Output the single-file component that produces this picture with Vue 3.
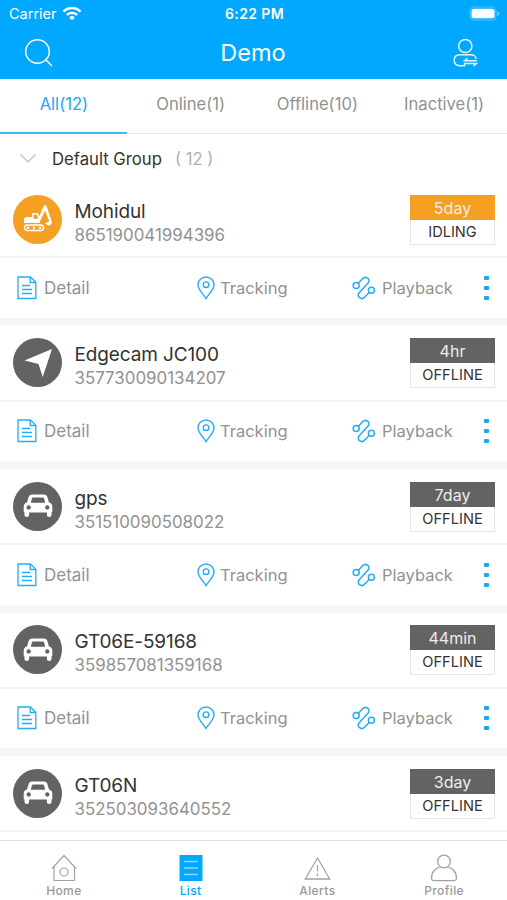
<template>
  <div class="screen">
    <header class="header">
      <div class="status_bar">
        <div class="carrier">
          <span>Carrier</span>
          <svg width="20" height="15" viewBox="0 0 20 15">
            <path d="M1.500 5.600a12 12 0 0 1 17 0" fill="none" stroke="#fff" stroke-width="2.600" />
            <path d="M4.800 9a7.400 7.400 0 0 1 10.400 0" fill="none" stroke="#fff" stroke-width="2.400" />
            <path d="M7.2 11.4a4 4 0 0 1 5.6 0L10 14.3z" fill="#fff" />
          </svg>
        </div>
        <span class="time">6:22 PM</span>
        <svg class="battery" width="31" height="15" viewBox="0 0 31 15">
          <rect x="1" y="1" width="26" height="13" rx="4" fill="none" stroke="#fff" stroke-opacity=".32" stroke-width="1.2" />
          <rect x="2.500" y="2.700" width="23" height="9.600" rx="2" fill="#fff" />
          <path d="M28.5 5q2 .6 2 2.500t-2 2.500z" fill="#fff" opacity=".4" />
        </svg>
      </div>
      <div class="nav_bar">
        <svg width="30" height="30" viewBox="0 0 30 30" fill="none" stroke="#fff" stroke-width="1.5">
          <circle cx="13.500" cy="13.500" r="11.800" />
          <path d="M21.500 21.500 28 28" />
        </svg>
        <h1>Demo</h1>
        <svg width="26" height="30" viewBox="0 0 26 30" fill="none" stroke="#e6f7ff" stroke-width="1.500">
          <circle cx="13.300" cy="8" r="6.600" />
          <path d="M24 21C24 18.500 21.800 16.800 19 16.800H8C4.500 16.800 2.200 19 2.200 22.300S4.500 27.700 8 27.700h4.500V25.500" />
          <path d="M24.800 22.800H12.500l3-2.500M12 25.400h12.500l-3 2.500" />
        </svg>
      </div>
    </header>

    <nav class="tabs">
      <div v-for="tab in tabs" :key="tab" class="tab" :class="{ active: tab === activeTab }" @click="activeTab = tab">
        <span>{{ tab }}</span>
      </div>
    </nav>

    <main class="list">
      <div class="group">
        <svg width="16" height="9" viewBox="0 0 16 9" fill="none" stroke="#c4c4c4" stroke-width="1.200">
          <path d="M.5.5 8 7.800 15.500.5" />
        </svg>
        <span class="group_name">Default Group</span>
        <span class="group_count">( 12 )</span>
      </div>

      <section v-for="device in devices" :key="device.imei" class="card">
        <div class="info">
          <div class="avatar" :class="{ idling: device.status === 'IDLING' }">
            <svg v-if="device.type === 'excavator'" width="30" height="28" viewBox="0 0 30 28" fill="#fff">
              <path d="M1 13.500 3 12h6V8.200h6l2 5V18H1z" />
              <path d="M10.500 9.700h3.500l1.300 4h-4.800z" fill="#f5a023" />
              <path d="M15.800 12.500 20.800.5h2.600l4.500 13.500-2.200 1L22 5.500l-4.500 10z" />
              <path d="M27.500 13.500c2.500 3 1.500 6.700-2 7.200l-3.500-2.400 3.500-1.500z" />
              <rect x="1.500" y="20" width="19" height="5.500" rx="2.750" fill="none" stroke="#fff" stroke-width="1.400" />
              <circle cx="5" cy="22.750" r="1.300" />
              <circle cx="11" cy="22.750" r="1.300" />
              <circle cx="17" cy="22.750" r="1.300" />
            </svg>
            <svg v-else-if="device.type === 'arrow'" width="30" height="30" viewBox="0 0 30 30" fill="#fff">
              <path d="M29 1 1.500 12.500l14 3.500L19.700 29z" />
            </svg>
            <svg v-else width="30" height="24" viewBox="0 0 30 24" fill="#fff">
              <path
                fill-rule="evenodd"
                d="M9 .5h12q2.500 0 3.200 2L26 8.500q3.300.8 3.300 4v5q0 1-.8 1v2.500q0 2-2.300 2t-2.300-2V18.500H6.100V21q0 2-2.300 2t-2.300-2v-2.500q-.8 0-.8-1v-5q0-3.200 3.300-4l1.800-6Q6.500.5 9 .5zM10 3.500q-.8 0-1.100 1L7.800 8.800h14.400L21.100 4.500q-.3-1-1.100-1zM5.700 11.300a2.200 2.200 0 1 0 .01 0zM24.300 11.300a2.200 2.200 0 1 0 .01 0z"
              />
            </svg>
          </div>
          <div class="device">
            <div class="name">{{ device.name }}</div>
            <div class="imei">{{ device.imei }}</div>
          </div>
          <div class="badge" :class="{ idling: device.status === 'IDLING' }">
            <div class="ago">{{ device.ago }}</div>
            <div class="state">{{ device.status }}</div>
          </div>
        </div>
        <div class="actions">
          <div class="action">
            <svg width="20" height="24" viewBox="0 0 20 24" fill="none" stroke="#27abf5" stroke-width="1.300">
              <path d="M1 1h12.500L18.800 6.300V22.500H1zM13.200 1v5.500h5.500M5 9.500h8M5 13.500h10M5 17.500h10" />
            </svg>
            <span>Detail</span>
          </div>
          <div class="action">
            <svg width="18" height="24" viewBox="0 0 18 24" fill="none" stroke="#27abf5" stroke-width="1.400">
              <path d="M9 22.500C7.500 19.500 1 14 1 9a8 8 0 0 1 16 0c0 5-6.500 10.500-8 13.500z" />
              <circle cx="9" cy="8.700" r="2.800" />
            </svg>
            <span>Tracking</span>
          </div>
          <div class="action">
            <svg width="24" height="24" viewBox="0 0 24 24" fill="none" stroke="#27abf5" stroke-width="1.500">
              <circle cx="4.200" cy="9.400" r="3" />
              <circle cx="19.400" cy="14.200" r="3" />
              <path d="M6.400 7.200 10.500 2.700C13.500-.5 19 3.200 16.300 6.700L7 17c-2.800 3.600 2.500 7.500 5.500 4.300l4.800-5" />
            </svg>
            <span>Playback</span>
          </div>
          <div class="more"><i></i><i></i><i></i></div>
        </div>
      </section>
    </main>

    <footer class="tab_bar">
      <div class="item">
        <svg width="26" height="28" viewBox="0 0 26 28" fill="none" stroke="#a3a3a3" stroke-width="1.200">
          <path d="M1 14.500 13 1.500l12 13M3 12.500v14h20.500v-14" />
          <circle cx="13" cy="18" r="4" />
        </svg>
        <span>Home</span>
      </div>
      <div class="item active">
        <svg width="24" height="28" viewBox="0 0 24 28">
          <path d="M.5 1h23v26H.5z" fill="#00a8ff" />
          <path d="M5 7.500h14M5 14h14M5 20.500h14" stroke="#8ed8ff" stroke-width="1.300" />
        </svg>
        <span>List</span>
      </div>
      <div class="item">
        <svg width="27" height="28" viewBox="0 0 27 28" fill="none" stroke="#a3a3a3" stroke-width="1.300">
          <path d="M13.500 4 1.300 25h24.400zM13.500 11v6.500M13.500 19.500v2.800" />
        </svg>
        <span>Alerts</span>
      </div>
      <div class="item">
        <svg width="28" height="28" viewBox="0 0 28 28" fill="none" stroke="#a3a3a3" stroke-width="1.300">
          <circle cx="14" cy="7.500" r="6.400" />
          <path d="M9.500 13.200C4.800 14.800 1.800 18.500 1.500 23.500q-.1 3.200 2.700 3.200h19.600q2.800 0 2.700-3.200c-.3-5-3.300-8.700-8-10.300" />
        </svg>
        <span>Profile</span>
      </div>
    </footer>
  </div>
</template>

<script setup>
import { ref } from 'vue'

const tabs = ['All(12)', 'Online(1)', 'Offline(10)', 'Inactive(1)']
const activeTab = ref('All(12)')

const devices = ref([
  { name: 'Mohidul', imei: '865190041994396', type: 'excavator', ago: '5day', status: 'IDLING' },
  { name: 'Edgecam JC100', imei: '357730090134207', type: 'arrow', ago: '4hr', status: 'OFFLINE' },
  { name: 'gps', imei: '351510090508022', type: 'car', ago: '7day', status: 'OFFLINE' },
  { name: 'GT06E-59168', imei: '359857081359168', type: 'car', ago: '44min', status: 'OFFLINE' },
  { name: 'GT06N', imei: '352503093640552', type: 'car', ago: '3day', status: 'OFFLINE' },
])
</script>

<style>
body {
  background: #fff;
}
</style>

<style scoped>
.screen {
  display: flex;
  flex-direction: column;
  height: 900px;
  overflow: hidden;
  background: #fff;
  font-family: Inter, 'Liberation Sans', sans-serif;
  color: #333;
}
svg {
  display: block;
  flex: none;
}
.header {
  flex: none;
  height: 79px;
  background: #00a8ff;
  color: #fff;
}
.status_bar {
  display: grid;
  grid-template-columns: 1fr auto 1fr;
  align-items: center;
  height: 27px;
  padding: 0 7px 0 9px;
  font-size: 14.5px;
}
.carrier {
  display: flex;
  align-items: center;
  gap: 5px;
}
.time {
  font-weight: 600;
  font-size: 14px;
  letter-spacing: 0.4px;
}
.battery {
  justify-self: end;
}
.nav_bar {
  display: flex;
  align-items: center;
  justify-content: space-between;
  height: 51px;
  padding: 0 29px 0 24px;
}
h1 {
  margin: 0;
  font-size: 23.5px;
  font-weight: 400;
}
.tabs {
  display: grid;
  grid-template-columns: repeat(4, 1fr);
  flex: none;
  height: 55px;
  box-sizing: border-box;
  border-bottom: 1px solid #e8e8e8;
}
.tab {
  display: flex;
  justify-content: center;
  padding: 15px 0 0 1px;
  height: 40px;
  line-height: 20px;
  font-size: 16.6px;
  color: #919191;
  box-sizing: border-box;
}
.tab.active {
  height: 55px;
  border-bottom: 2px solid #45b5f2;
  color: #20a9f5;
}
.list {
  flex: 1;
  min-height: 0;
  overflow: hidden;
}
.group {
  display: flex;
  align-items: center;
  height: 48px;
  padding: 1px 20px 0;
  box-sizing: border-box;
  font-size: 16.7px;
}
.group_name {
  margin-left: 16px;
}
.group_count {
  margin-left: 13px;
  color: #b0b0b0;
}
.card {
  height: 143.6px;
  box-sizing: border-box;
  border-bottom: 8px solid #f6f6f6;
}
.info {
  display: flex;
  align-items: center;
  height: 76px;
  padding: 0 12px 0 13px;
  box-sizing: border-box;
  border-bottom: 2px solid #f3f3f3;
}
.avatar {
  display: flex;
  align-items: center;
  justify-content: center;
  width: 49px;
  height: 49px;
  border-radius: 50%;
  background: #636363;
}
.avatar.idling {
  background: #f5a023;
}
.device {
  flex: 1;
  margin-left: 12.5px;
  padding-top: 7px;
}
.name {
  font-size: 19px;
  line-height: 25px;
  letter-spacing: -0.12px;
}
.imei {
  font-size: 16.9px;
  line-height: 23px;
  color: #929292;
}
.badge {
  width: 85px;
  height: 50px;
  margin-top: 1px;
  box-sizing: border-box;
  text-align: center;
}
.ago {
  height: 25px;
  line-height: 26px;
  font-size: 16px;
  color: #eee;
  background: #636363;
}
.badge.idling .ago {
  background: #f5a023;
}
.state {
  height: 25px;
  line-height: 25px;
  box-sizing: border-box;
  border: 1px solid #e6e6e6;
  border-top: none;
  font-size: 14.6px;
}
.actions {
  display: grid;
  grid-template-columns: 180px 155px 1fr auto;
  align-items: center;
  height: 59px;
  padding: 0 18px 0 17px;
  font-size: 16.5px;
  color: #929292;
}
.action {
  display: flex;
  align-items: center;
  gap: 7px;
}
.action:first-child {
  font-size: 17px;
}
.action:nth-child(2) {
  gap: 5px;
}
.action:nth-child(3) {
  gap: 6px;
}
.more {
  display: flex;
  flex-direction: column;
  gap: 6px;
}
.more i {
  width: 5px;
  height: 4px;
  border-radius: 1px;
  background: #18a7f5;
}
.tab_bar {
  display: grid;
  grid-template-columns: repeat(4, 1fr);
  flex: none;
  height: 60px;
  box-sizing: border-box;
  border-top: 1px solid #dedede;
}
.item {
  display: flex;
  flex-direction: column;
  align-items: center;
  padding: 13px 0 0 1px;
  font-size: 12px;
  font-weight: 500;
  line-height: 16px;
  gap: 1px;
  letter-spacing: 0.4px;
  color: #999;
}
.item.active {
  color: #00a8ff;
}
</style>
